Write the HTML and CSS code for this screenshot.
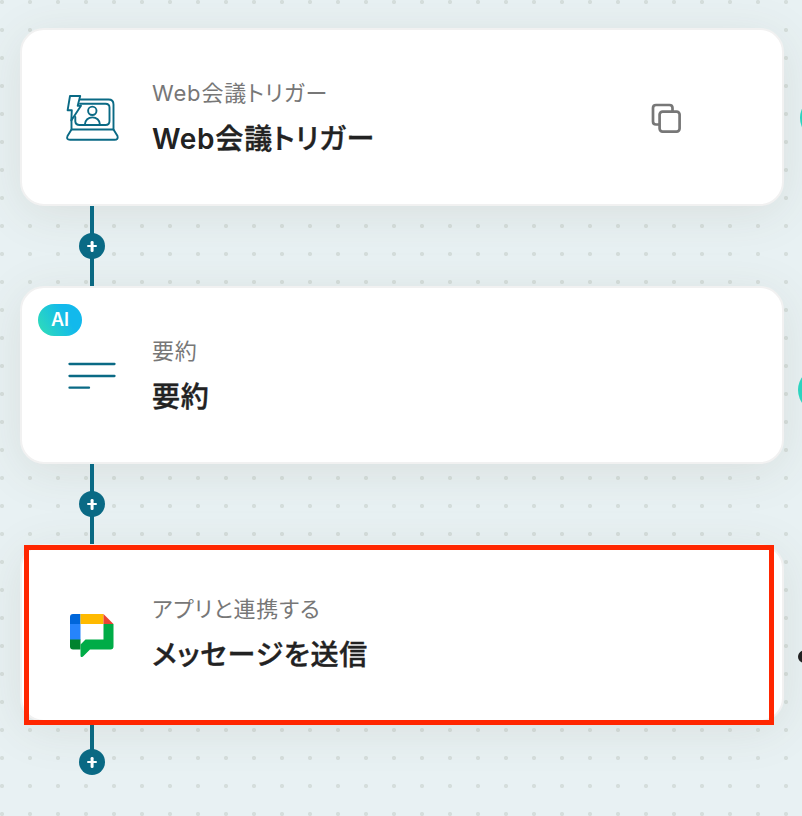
FILE: index.html
```html
<!DOCTYPE html>
<html lang="ja">
<head>
<meta charset="utf-8">
<title>ワークフロー</title>
<link rel="stylesheet" href="styles.css">
</head>
<body>
<main class="flow">
  <section class="card">
    <svg class="icon" viewBox="0 0 60 60" fill="none" stroke="#0a6a85" stroke-width="1.9" stroke-linejoin="round" stroke-linecap="round">
      <path d="M18.500 11.500H46.500Q51.500 11.500 51.500 16.500V41.500M9.500 32V41.500M18 15.700H43.500Q47.500 15.700 47.500 19.500V33Q47.500 37 43.500 37H17.500Q13.800 37 13.300 33.500L13.300 29"/>
      <path d="M9.500 41.500H51.500L55.500 48Q56.500 51.800 52.500 51.800H8Q4 51.800 5.500 48Z"/>
      <circle cx="30.300" cy="22.800" r="4.200"/>
      <path d="M22.800 37C22.800 26.800 38 26.800 38 37"/>
      <path fill="#fff" d="M8 8H18.200L15.700 17.800H19L9.300 32.500 9.800 22.300H5.600Z"/>
    </svg>
    <div class="text">
      <p class="label">Web会議トリガー</p>
      <h2 class="title"><span class="latin">Web</span>会議トリガー</h2>
    </div>
    <svg class="copy" viewBox="0 0 32 32" fill="none" stroke="#777" stroke-width="2.7" stroke-linejoin="round">
      <path d="M9 22.500H6Q3 22.500 3 19.500V6Q3 3 6 3H19.500Q22.500 3 22.500 6V9"/>
      <rect x="9.600" y="9.600" width="20" height="20" rx="3"/>
    </svg>
  </section>
  <div class="connector"><span class="add"></span></div>
  <section class="card">
    <span class="badge">AI</span>
    <svg class="icon" viewBox="0 0 60 60" fill="none" stroke="#0a6a85" stroke-width="2.300" stroke-linecap="round">
      <path d="M7.500 18H52.500M7.500 30H52.500M7.500 41.700H27"/>
    </svg>
    <div class="text">
      <p class="label">要約</p>
      <h2 class="title">要約</h2>
    </div>
  </section>
  <div class="connector"><span class="add"></span></div>
  <section class="card">
    <svg class="icon" viewBox="0 0 60 60">
      <path fill="#0066da" d="M18.500 10V20H8V13Q8 10 11 10Z"/>
      <path fill="#2684fc" d="M8 20H18.500V36H8Z"/>
      <path fill="#00832d" d="M8 35.500H18.500V45.500H11Q8 45.500 8 42.500Z"/>
      <path fill="#ffba00" d="M18.500 10H41.500V20H18.500Z"/>
      <path fill="#ea4335" d="M41.500 10 51.500 20H41.500Z"/>
      <path fill="#00ac47" d="M41.500 20H51.500V42.500Q51.500 45.500 48.500 45.500H28L21 52.500Q18.500 54 18.500 51.500V40.500L23.500 35.500H41.500Z"/>
    </svg>
    <div class="text">
      <p class="label">アプリと連携する</p>
      <h2 class="title">メッセージを送信</h2>
    </div>
    <div class="highlight"></div>
  </section>
  <div class="connector last"><span class="add"></span></div>
</main>
<div class="edge">
  <span class="node node-a"></span>
  <span class="node node-b"></span>
  <span class="node node-c"></span>
</div>
</body>
</html>
```

FILE: styles.css
```css
* { box-sizing: border-box; }
body {
  position: relative;
  margin: 0;
  height: 816px;
  overflow: hidden;
  background: radial-gradient(circle at 2px 2px, #d5dedc 1.8px, transparent 2.4px) 0 0 / 28px 28px, #e8f1f3;
  font-family: Inter, "Noto Sans CJK JP", sans-serif;
}
.flow { width: 764px; margin-left: 20px; padding-top: 28px; }
.card {
  position: relative;
  display: flex;
  align-items: center;
  height: 178px;
  padding: 3px 100px 0 40px;
  background: #fff;
  border: 2px solid #f1f1f1;
  border-radius: 24px;
  box-shadow: 0 8px 48px rgba(90, 80, 50, .1);
}
.icon { width: 60px; height: 60px; flex: none; margin-bottom: 2px; }
.text { flex: 1; margin-left: 30px; white-space: nowrap; }
.label, .title { margin: 0; font-feature-settings: "palt"; }
.label { font-size: 22px; line-height: 34px; font-weight: 400; letter-spacing: .85px; color: #777; }
.title { margin-top: 7px; font-size: 28px; line-height: 44px; font-weight: 500; letter-spacing: .85px; color: #222; -webkit-text-stroke: .4px #222; }
.latin { font-weight: 600; letter-spacing: .7px; -webkit-text-stroke: 0; }
.copy { width: 32px; height: 32px; margin-bottom: 1px; }
.connector {
  position: relative;
  display: flex;
  align-items: center;
  justify-content: center;
  width: 4px;
  height: 80px;
  margin-left: 70px;
  background: #0a6a85;
}
.connector.last { height: 40px; align-items: flex-end; z-index: -1; }
.last .add { margin-bottom: -13px; }
.add {
  position: relative;
  flex: none;
  width: 26px;
  height: 26px;
  border-radius: 50%;
  background: #0a6a85;
}
.add::before, .add::after {
  content: "";
  position: absolute;
  left: 7.7px;
  top: 11.7px;
  width: 10.6px;
  height: 2.6px;
  border-radius: 1.3px;
  background: #fff;
}
.add::after { transform: rotate(90deg); }
.badge {
  position: absolute;
  left: 16px;
  top: 16px;
  width: 44px;
  height: 32px;
  border-radius: 16px;
  background: linear-gradient(60deg, #2fdcb9 5%, #12b9ec 65%);
  color: #fff;
  font: 600 18px/32px Inter, sans-serif;
  text-align: center;
}
.highlight {
  position: absolute;
  left: 2px;
  top: -1px;
  width: 750px;
  height: 180px;
  border: 5px solid #ff2600;
}
.edge { position: absolute; right: 0; top: 0; width: 4px; height: 816px; overflow: hidden; }
.node { position: absolute; border-radius: 50%; background: #2dd4bf; }
.node-a { left: 2px; top: 96px; width: 44px; height: 44px; }
.node-b { left: 0; top: 368px; width: 44px; height: 44px; }
.node-c { left: 0; top: 650px; width: 14px; height: 13px; background: #222; transform: rotate(-20deg); }
```
